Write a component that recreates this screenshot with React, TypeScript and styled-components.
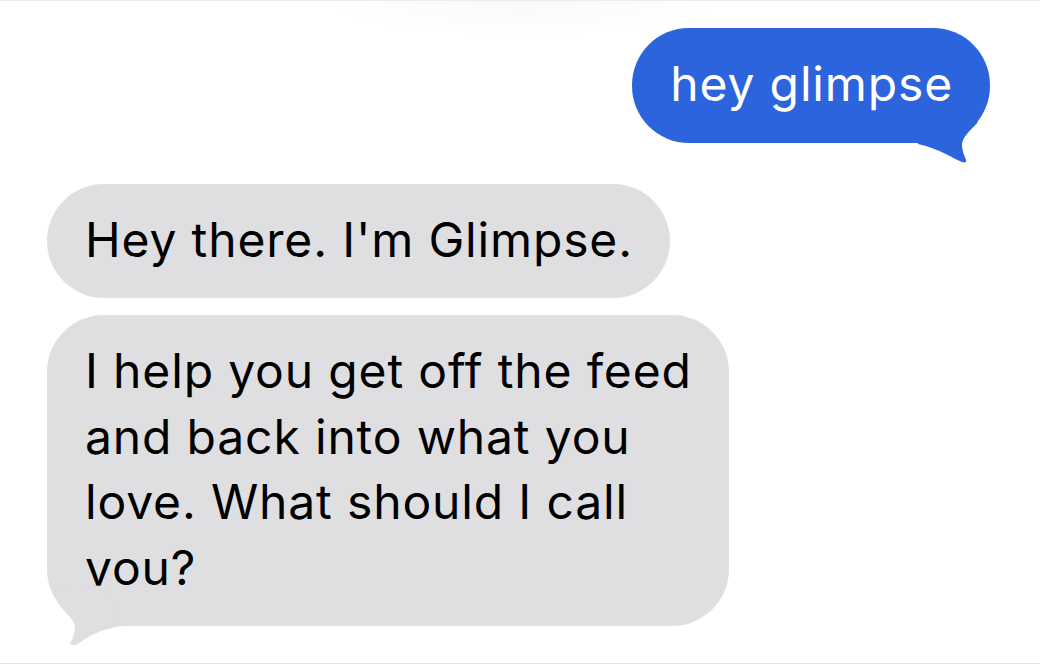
import styled, { createGlobalStyle } from 'styled-components'

const GlobalStyle = createGlobalStyle`
  html, body {
    margin: 0;
    padding: 0;
    background: #ffffff;
  }
  body {
    font-family: Inter, "Noto Sans", "Liberation Sans", sans-serif;
    -webkit-font-smoothing: antialiased;
  }
`

const Thread = styled.div`
  box-sizing: border-box;
  width: 1040px;
  height: 664px;
  padding: 27px 50px 0 47px;
  display: flex;
  flex-direction: column;
  border-top: 1px solid #ececec;
  border-bottom: 1px solid #e4e4e4;
  background: radial-gradient(ellipse 210px 36px at 525px 0, rgba(0, 0, 0, 0.025), rgba(0, 0, 0, 0) 100%);
`

const Row = styled.div<{ $side: 'in' | 'out'; $gap: number }>`
  display: flex;
  justify-content: ${p => (p.$side === 'out' ? 'flex-end' : 'flex-start')};
  margin-top: ${p => p.$gap}px;
`

const Bubble = styled.div<{ $side: 'in' | 'out' }>`
  position: relative;
  padding: 23px 37px 26px 38px;
  border-radius: 57px;
  font-size: 48px;
  line-height: 65.5px;
  letter-spacing: 0.85px;
  background: ${p => (p.$side === 'out' ? '#2b64dc' : '#dfdfe2')};
  color: ${p => (p.$side === 'out' ? '#ffffff' : '#000000')};
`

// little curled tails under the last bubble of each side
const OutTail = styled.svg`
  position: absolute;
  right: 0;
  bottom: -20px;
  width: 80px;
  height: 50px;
`

const InTail = styled.svg`
  position: absolute;
  left: 0;
  bottom: -20px;
  width: 80px;
  height: 70px;
`

interface IMessage {
  side: 'in' | 'out'
  gap: number
  lines: string[]
  tail?: boolean
}

const messages: IMessage[] = [
  { side: 'out', gap: 0, lines: ['hey glimpse'], tail: true },
  { side: 'in', gap: 41, lines: ["Hey there. I'm Glimpse."] },
  {
    side: 'in',
    gap: 17,
    lines: ['I help you get off the feed', 'and back into what you', 'love. What should I call', 'you?'],
    tail: true,
  },
]

function Message({ side, gap, lines, tail }: IMessage) {
  return (
    <Row $side={side} $gap={gap}>
      <Bubble $side={side}>
        {lines.map((line, i) => (
          <span key={i}>
            {line}
            {i < lines.length - 1 && <br />}
          </span>
        ))}
        {tail && side === 'out' && (
          <OutTail viewBox="0 0 80 50">
            <path
              d="M8 28 L62 4 L68 9 C60 18 52 24 52 32 C52 38 55 44 56 47 C57 49 55 50 52 49 C44 46 30 36 8 31 Z"
              fill="#2b64dc"
            />
          </OutTail>
        )}
        {tail && side === 'in' && (
          <InTail viewBox="0 0 80 70">
            <path
              d="M3 8 C6 20 12 30 22 40 C28 46 29 52 27 58 C26 62 24 66 23 68 C25 70 29 69 32 67 C40 62 50 54 74 50 L60 10 Z"
              fill="#dfdfe2"
            />
          </InTail>
        )}
      </Bubble>
    </Row>
  )
}

export default function App() {
  return (
    <>
      <GlobalStyle />
      <Thread>
        {messages.map((m, i) => (
          <Message key={i} {...m} />
        ))}
      </Thread>
    </>
  )
}
